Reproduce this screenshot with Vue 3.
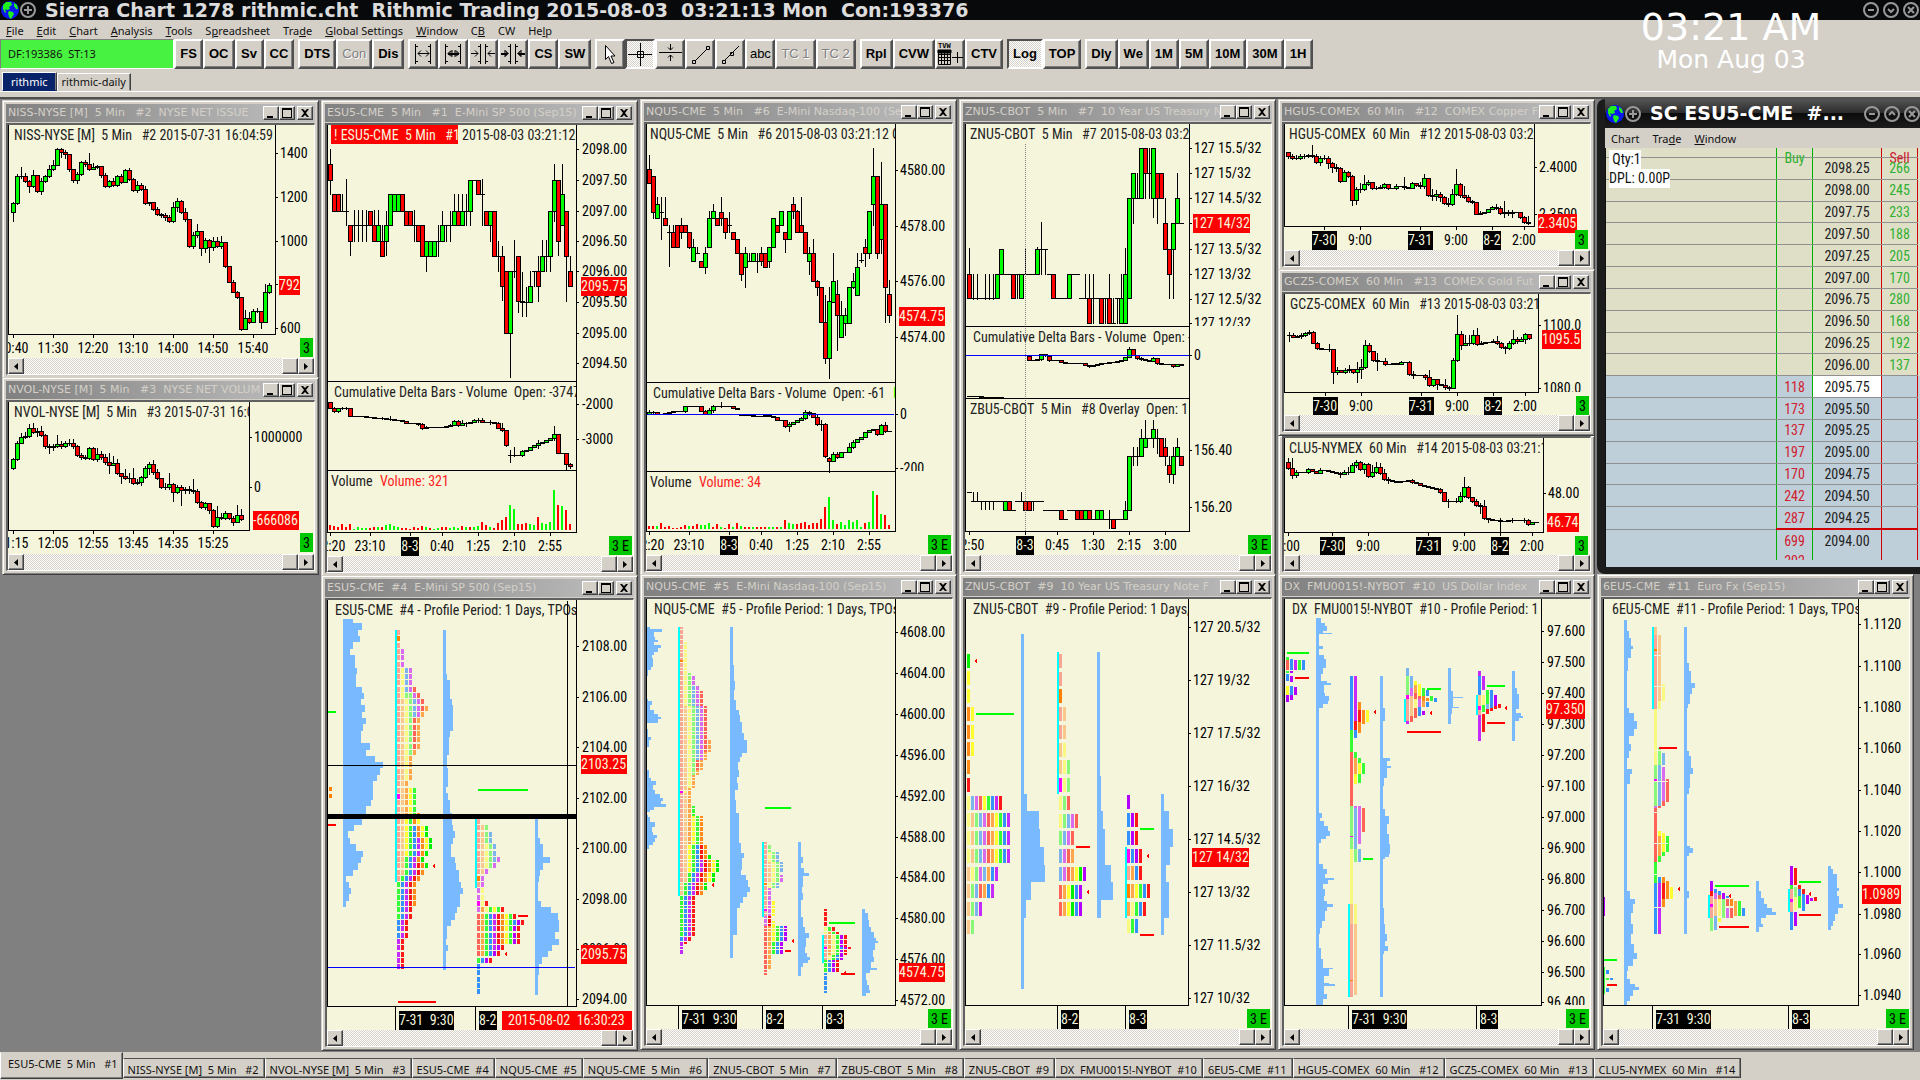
<template>
  <div class="app">
    <header class="titlebar">
      <svg class="globe" viewBox="0 0 20 20"><circle cx="10" cy="10" r="9" /><path d="M3 5l3-3 5 0 1 3-3 2 1 2-3 1-2-1 1 3-1 1-2-4zM9 11l4 1 1 2-3 5-2-2-1-4zM14 3l3 2 1 4-2 0-2-3z" /></svg>
      <svg class="ring" viewBox="0 0 16 16"><circle cx="8" cy="8" r="7" /><path d="M4 8h8M8 4v8" /></svg>
      <h1>Sierra Chart 1278 rithmic.cht&nbsp; Rithmic Trading 2015-08-03&nbsp; 03:21:13 Mon&nbsp; Con:193376</h1>
      <button v-for="g in ['M5 8h6', 'M5 7l3 3 3-3', 'M5 5l6 6M11 5l-6 6']" :key="g" class="round" aria-label="Window control">
        <svg class="ring" viewBox="0 0 16 16"><circle cx="8" cy="8" r="7" /><path :d="g" /></svg>
      </button>
    </header>

    <nav class="menu">
      <button v-for="m in menus" :key="m[0] + m[1]">{{ m[0] }}<u>{{ m[1] }}</u>{{ m[2] }}</button>
    </nav>

    <div class="toolbar">
      <div class="status">DF:193386&nbsp; ST:13</div>
      <div v-for="(group, gi) in tools" :key="gi" class="tool-group">
        <button
          v-for="t in group"
          :key="t.name"
          class="tool"
          :class="{ icon: t.icon, pressed: t.pressed, thin: t.thin }"
          :disabled="t.off"
          :aria-label="t.name"
        >
          <svg v-if="t.icon" viewBox="0 0 26 26">
            <path :d="t.icon" :class="{ heavy: t.heavy, pointer: t.pointer }" />
            <path v-if="t.solid" :d="t.solid" class="solid" />
            <text v-if="t.caption" x="1" y="7">{{ t.caption }}</text>
          </svg>
          <template v-else>{{ t.name }}</template>
        </button>
      </div>
    </div>

    <div class="books">
      <button class="book on">rithmic</button>
      <button class="book">rithmic-daily</button>
    </div>

    <main class="desktop">
      <div v-for="(col, ci) in columns" :key="ci" class="column">
        <section v-if="ci === 5" class="ladder">
          <div class="ladder-title">
            <svg class="globe" viewBox="0 0 20 20"><circle cx="10" cy="10" r="9" /><path d="M3 5l3-3 5 0 1 3-3 2 1 2-3 1-2-1 1 3-1 1-2-4zM9 11l4 1 1 2-3 5-2-2-1-4zM14 3l3 2 1 4-2 0-2-3z" /></svg>
            <svg class="ring" viewBox="0 0 16 16"><circle cx="8" cy="8" r="7" /><path d="M4 8h8M8 4v8" /></svg>
            <h2>SC ESU5-CME&nbsp; #...</h2>
            <button v-for="g in ['M5 8h6', 'M5 9l3-3 3 3', 'M5 5l6 6M11 5l-6 6']" :key="g" class="round" aria-label="Window control">
              <svg class="ring" viewBox="0 0 16 16"><circle cx="8" cy="8" r="7" /><path :d="g" /></svg>
            </button>
          </div>
          <nav class="menu inner">
            <button>Chart</button>
            <button>Tra<u>d</u>e</button>
            <button><u>W</u>indow</button>
          </nav>
          <div class="dom">
            <table>
              <thead>
                <tr>
                  <th class="work"></th>
                  <th class="buy"><span class="up">Buy</span></th>
                  <th class="price"></th>
                  <th class="sell"><span class="down">Sell</span></th>
                </tr>
              </thead>
              <tbody>
                <tr v-for="r in ladder" :key="r.price" :class="{ bid: r.bid, low: r.price === '2094.25' }">
                  <td></td>
                  <td class="buy down">{{ r.bid }}</td>
                  <td class="price" :class="{ last: r.price === '2095.75' }">{{ r.price }}</td>
                  <td class="sell up">{{ r.ask }}</td>
                </tr>
              </tbody>
              <tfoot>
                <tr>
                  <td></td>
                  <td class="buy"><span class="down">202</span></td>
                  <td class="price"></td>
                  <td class="sell"></td>
                </tr>
              </tfoot>
            </table>
            <div class="qty"><span>&nbsp;Qty:1</span><span>DPL: 0.00P</span></div>
          </div>
        </section>

        <section v-for="c in col" :key="c.name" class="win" :class="{ bare: !c.title }">
          <div v-if="c.title" class="win-title">
            <h2>{{ c.title }}</h2>
            <button aria-label="Minimize"><svg viewBox="0 0 12 10"><path d="M2 8h6v2h-6z" /></svg></button>
            <button aria-label="Maximize"><svg viewBox="0 0 12 10"><path d="M1 0h10v10h-10zM2 2v7h8v-7z" fill-rule="evenodd" /></svg></button>
            <button class="close" aria-label="Close"><svg viewBox="0 0 12 10"><path d="M2 1h2l2 2 2-2h2l-3 4 3 4h-2l-2-2-2 2h-2l3-4z" /></svg></button>
          </div>
          <div class="win-body">
            <svg class="chart" width="100%" :height="c.h">
              <svg :width="c.right - c.left" :height="c.bottom - c.top">
                <g :transform="`translate(${-c.left} ${-c.top})`">
                  <path v-for="(s, i) in c.shapes" :key="i" :d="s.d" :fill="s.fill" />
                  <path v-if="c.session" :d="`M${c.session}.5 ${c.top + 20}V${c.bottom}`" class="session" />
                  <rect v-if="c.alert" :x="c.left + 4" :y="c.top" width="127" height="19" fill="#f00" />
                  <text v-for="t in c.texts" :key="t[2]" :x="t[0]" :y="c.y(t[1]) + 5" :fill="t[3] || '#222'">{{ t[2] }}</text>
                  <path v-if="c.cursor" :d="rect(c.cursor, c.top + 1, 1, c.h)" />
                </g>
              </svg>
              <g :transform="`translate(${-c.left} ${-c.top})`">
                <path :d="c.frame" />
                <svg v-for="a in c.axis" :key="a[0]" :x="c.right" :y="c.top" width="80" :height="floorOf(c, a[0]) - c.top">
                  <rect x="0" :y="c.y(a[0]) - c.top" width="3" height="1" />
                  <text :x="c.ax - c.right" :y="c.y(a[0]) - c.top + 5">{{ a[1] }}</text>
                </svg>
                <g v-for="m in c.marks" :key="m[1]">
                  <rect :x="c.ax - 1" :y="c.y(m[0]) - 9" :width="textWidth(m[1])" height="19" fill="#f00" />
                  <text :x="c.ax - 1" :y="c.y(m[0]) + 5" class="mark">{{ m[1] }}</text>
                </g>
                <g v-for="t in c.times" :key="t[0]">
                  <template v-if="c.sessions">
                    <rect :x="t[0]" :y="c.bottom" width="1" height="24" />
                    <rect :x="t[0] + 4" :y="c.y(c.timeY) - 9" :width="boxWidth(t[1])" height="19" />
                    <text :x="t[0] + 4" :y="c.y(c.timeY) + 5" class="inv">{{ t[1] }}</text>
                  </template>
                  <template v-else>
                    <rect :x="t[0]" :y="c.bottom" width="1" height="4" />
                    <rect v-if="t[2]" :x="t[0] - boxWidth(t[1]) / 2" :y="c.y(c.timeY) - 9" :width="boxWidth(t[1])" height="19" />
                    <text :x="t[0]" :y="c.y(c.timeY) + 5" text-anchor="middle" :class="{ inv: t[2] }">{{ t[1] }}</text>
                  </template>
                </g>
                <g v-if="c.cursor">
                  <rect x="502" :y="c.y(c.timeY) - 9" width="130" height="19" fill="#f00" />
                  <text x="508" :y="c.y(c.timeY) + 5" class="mark">2015-08-02&nbsp; 16:30:23</text>
                </g>
                <g v-if="c.badge">
                  <rect :x="c.badge[0]" :y="c.y(c.timeY) - 10" :width="c.badge[1] === '3' ? 13 : 23" height="19" fill="#00c800" />
                  <text :x="c.badge[0] + 3" :y="c.y(c.timeY) + 5">{{ c.badge[1] }}</text>
                </g>
              </g>
            </svg>
            <div class="scroll">
              <button aria-label="Scroll left"><svg viewBox="0 0 4 7"><path d="M4 0v7L0 3.5z" /></svg></button>
              <span class="thumb"></span>
              <button aria-label="Scroll right"><svg viewBox="0 0 4 7"><path d="M0 0v7l4-3.5z" /></svg></button>
            </div>
          </div>
        </section>
      </div>
    </main>

    <footer class="tabs">
      <button v-for="(t, i) in tabs" :key="t" :class="{ on: i === 0 }">{{ t }}</button>
    </footer>

    <div class="clock">
      <div class="time">03:21 AM</div>
      <div class="date">Mon Aug 03</div>
    </div>
  </div>
</template>

<script setup>
const menus = [
  ["", "F", "ile"], ["", "E", "dit"], ["", "C", "hart"], ["", "A", "nalysis"], ["", "T", "ools"],
  ["S", "p", "readsheet"], ["Tra", "d", "e"], ["", "G", "lobal Settings"], ["", "W", "indow"],
  ["C", "B", ""], ["CW", "", ""], ["He", "l", "p"],
];

const WIDER = "M5.5 3v20M5 5.5h3M5 20.5h3M20.5 3v20M18 5.5h3M18 20.5h3M8 12.5h11M11 9.5l-3 3 3 3M16 9.5l3 3-3 3";
const NARROWER = "M10.5 3v20M8 5.5h3M8 20.5h3M15.5 3v20M15 5.5h3M15 20.5h3M1 12.5h7M5 9.5l3 3-3 3M18 12.5h7M21 9.5l-3 3 3 3";

const tools = [
  [{ name: "FS" }, { name: "OC" }, { name: "Sv" }, { name: "CC" }],
  [{ name: "DTS" }, { name: "Con", off: true }, { name: "Dis" }],
  [
    { name: "Wider", icon: WIDER },
    { name: "Wider fast", icon: WIDER + "M9 12.5l3-3v6zM18 12.5l-3-3v6zM8 13.5h11" },
    { name: "Narrower", icon: NARROWER },
    { name: "Narrower fast", icon: NARROWER + "M8 12.5l-3-3v6zM18 12.5l3-3v6zM1 13.5h6M19 13.5h6" },
    { name: "CS" },
    { name: "SW" },
  ],
  [
    { name: "Pointer", icon: "M8.5 4.5v14l3-3 3 7 2.5-1-3-6.5h4z", pointer: true },
    { name: "Crosshair", icon: "M1 13.5h24M13.5 2v23M10.5 10.5h6v6h-6z", pressed: true },
    { name: "Level", icon: "M2 11.5h23M13.5 3v6M11 6.5l2.5 2.5 2.5-2.5M13.5 14v6M11 16.5l2.5-2.5 2.5 2.5" },
    { name: "Line", icon: "M8 20L20 8M5.5 19.5h3v3h-3zM19.5 5.5h3v3h-3z" },
    { name: "Ray", icon: "M7 20L22 5M5.5 19.5h3v3h-3zM13.5 11.5h3v3h-3z" },
    { name: "abc", thin: true },
    { name: "TC 1", off: true },
    { name: "TC 2", off: true },
  ],
  [
    { name: "Rpl" },
    { name: "CVW" },
    { name: "TVW", caption: "TVW", icon: "M15 16.5h11M20.5 11v11M1.5 9.5h12v14h-12zM1 13.5h12M1 16.5h12M1 19.5h12M4.5 10v13M7.5 10v13M10.5 10v13", solid: "M1 9h13v3h-13z" },
    { name: "CTV" },
  ],
  [{ name: "Log", pressed: true }, { name: "TOP" }],
  [{ name: "Dly" }, { name: "We" }, { name: "1M" }, { name: "5M" }, { name: "10M" }, { name: "30M" }, { name: "1H" }],
];

const asks = [266, 245, 233, 188, 205, 170, 280, 168, 192, 137];
const bids = [118, 173, 137, 197, 170, 242, 287, 699];
const ladder = Array.from({ length: 18 }, (_, i) => ({
  price: (2098.25 - i * 0.25).toFixed(2),
  ask: asks[i],
  bid: bids[i - 10],
}));

const N = "\u00a0";
const sp = (s) => s.replace(/ {2,}/g, (m) => N.repeat(m.length));

const tabs = [
  "ESU5-CME  5 Min   #1", "NISS-NYSE [M]  5 Min   #2", "NVOL-NYSE [M]  5 Min   #3", "ESU5-CME  #4",
  "NQU5-CME  #5", "NQU5-CME  5 Min   #6", "ZNU5-CBOT  5 Min   #7", "ZBU5-CBOT  5 Min   #8",
  "ZNU5-CBOT  #9", "DX  FMU0015!-NYBOT  #10", "6EU5-CME  #11", "HGU5-COMEX  60 Min   #12",
  "GCZ5-COMEX  60 Min   #13", "CLU5-NYMEX  60 Min   #14",
].map(sp);

const rect = (x, y, w, h) => `M${x} ${y}h${w}v${h}h${-w}z`;

const CHAR = { ".": 4, "-": 4, " ": 3, "/": 5 };
const textWidth = (s) => [...s].reduce((n, ch) => n + (CHAR[ch] || 7), 0);
const boxWidth = (s) => (s.length > 5 ? 55 : s.length === 4 ? 25 : 18);

// vertical values are kept in thirds of a pixel below the row origin
const TOP = 95;
const LOW = 570;
const at = (base) => (v) => base + Math.round(v / 3);

const expand = (s) =>
  s.trim().split(/\s+/).flatMap((e) => {
    const m = e.match(/^(\d+)\*(.+)$/);
    return m ? Array(+m[1]).fill(m[2]) : [e];
  });

// close/high/low/open, the open defaults to the previous close
function candles(x0, open, data) {
  const y = at(TOP);
  let black = "";
  let up = "";
  let down = "";
  let prev = open;
  expand(data).forEach((e, i) => {
    if (e === "-") return;
    const [close, hi = close, lo = close, o = prev] = e.split("/").map(Number);
    const x = x0 + i * 4;
    const t = y(Math.min(o, close));
    const b = y(Math.max(o, close));
    const wt = Math.min(y(hi), t);
    black += rect(x, wt, 1, Math.max(y(lo), b) - wt + 1) + rect(x - 2, t, 5, b - t + 1);
    if (b - t > 1) {
      const body = rect(x - 1, t + 1, 3, b - t - 1);
      if (close < o) up += body;
      else down += body;
    }
    prev = close;
  });
  return [{ fill: "#000", d: black }, { fill: "#0f0", d: up }, { fill: "#f00", d: down }];
}

function volume(x0, floor, data) {
  const out = { g: "", r: "" };
  expand(data).forEach((e, i) => {
    const h = Math.round(parseInt(e) / 3);
    out[e.at(-1)] += rect(x0 + i * 4 - 1, at(TOP)(floor) - h, 2, h);
  });
  return [{ fill: "#0f0", d: out.g }, { fill: "#f00", d: out.r }];
}

const PALETTE = {
  p: "#f9a596", o: "#f9c78b", y: "#f9f880", g: "#88f77a", b: "#7ab5ee", m: "#d86cf0", r: "#ff6257",
  O: "#ffa54a", Y: "#ffff30", G: "#38fb38", B: "#3392fb", M: "#c42bfb", R: "#ff1818", N: "#ff8c1a",
  h: "#ff8000", v: "#ff00ff", e: "#00f000", V: "#b400ff",
};

const paint = (cells) => {
  const by = {};
  cells.forEach(([c, d]) => (by[c] = (by[c] || "") + d));
  return Object.entries(by).map(([c, d]) => ({ fill: PALETTE[c], d }));
};

function tpo(x, y0, step, cell, rows) {
  const cells = [];
  expand(rows).forEach((row, i) => {
    [...row].forEach((c, k) => cells.push([c, rect(x + k * 4, at(LOW)(y0 + i * step), 3, cell)]));
  });
  return paint(cells);
}

// column:from-to+color, h and v marks go on top of the column they sit in
function strips(x, data) {
  const cells = data.trim().split(/\s+/).map((e) => {
    const [, k, a, b, c] = e.match(/^(-?\d+):(\d+)-(\d+)(\w)$/);
    const y = at(LOW)(+a);
    return [c, rect(x + k * 4, y, 3, Math.max(1, at(LOW)(+b) - y))];
  });
  const mark = ([c]) => c === "h" || c === "v";
  return [...paint(cells.filter((c) => !mark(c))), ...paint(cells.filter(mark))];
}

function hist(x, data, end) {
  const steps = data.trim().split(/\s+/).map((e) => e.split(":").map(Number));
  const y = at(LOW);
  const d = steps
    .map(([v, w], i) => {
      const to = i + 1 < steps.length ? steps[i + 1][0] : end;
      return w ? rect(x, y(v), Math.round(w / 3), y(to) - y(v)) : "";
    })
    .join("");
  return [{ fill: "#78b9ff", d }];
}

const cyan = (...list) => [{ fill: "#00ffff", d: list.map(([x, a, b]) => rect(x, at(LOW)(a), 2, at(LOW)(b) - at(LOW)(a))).join("") }];
const dash = (fill, ...list) => [{ fill, d: list.map(([x, x2, v]) => rect(x, at(LOW)(v) - 1, x2 - x, 2)).join("") }];
const arrows = (...list) => [{ fill: "#f00", d: list.map(([x, v]) => `M${x} ${at(LOW)(v)}l3 -3v6z`).join("") }];
const hline = (base, fill, x, x2, v, h = 1) => [{ fill, d: rect(x, at(base)(v), x2 - x, h) }];

const GREEN = "#0f0";
const RED = "#f00";
const PAPER = "#f5f5dc";

function chart(c) {
  const base = c.base || TOP;
  const y = at(base);
  const frame =
    rect(c.left, c.top, 1, c.bottom - c.top) +
    rect(c.right, c.top, 1, c.bottom - c.top + 1) +
    rect(c.left, c.bottom, c.right - c.left, 1) +
    (c.panes || []).map((v) => rect(c.left, y(v), c.right - c.left, 1)).join("");
  return {
    ...c,
    y,
    frame,
    title: c.title && sp(c.title),
    texts: c.texts.map(([x, v, t, f]) => [x, v, sp(t), f]),
    times: c.times.map(([x, t, k]) => [x, sp(t), k]),
  };
}

const floorOf = (c, v) => Math.min(c.bottom, ...(c.panes || []).filter((p) => p > v).map(c.y));

const niss = chart({
  name: "niss", title: "NISS-NYSE [M]  5 Min   #2  NYSE NET ISSUE", left: 8, top: 125, h: 233, right: 275, bottom: 334, ax: 280,
  texts: [[14, 119, "NISS-NYSE [M]  5 Min   #2 2015-07-31 16:04:59"]],
  axis: [[175, "1400"], [305, "1200"], [437, "1000"], [568, ""], [698, "600"]],
  marks: [[571, "792"]],
  timeY: 758, badge: [300, "3"],
  times: [[13, "10:40"], [53, "11:30"], [93, "12:20"], [133, "13:10"], [173, "14:00"], [213, "14:50"], [253, "15:40"]],
  shapes: candles(13, 350, `325/322/377 244/238/326 244/215/250 257/235/262 273/255/290 241/225/275 289/240/291 257/250/296 244/240/260 223/210/245
    209/195/225 163/160/210 172/160/187 178/165/190 223/178/228 256/223/260 238/230/265 202/198/240 207/195/212 222/175/225
    217/205/222 214/210/218 240/213/245 273/235/275 258/255/275 270/250/273 243/240/273 262/237/265 226/222/262 253/220/255
    286/250/288 270/258/290 282/265/285 324/272/328 322/320/330 343/322/345 357/335/360 360/355/365 367/355/375 379/360/382
    336/320/380 319/310/348 352/315/355 373/340/377 452/373/457 419/410/460 407/387/425 460/408/480 436/430/470 457/432/500
    438/425/465 452/425/455 441/422/460 512/440/515 560/512/562 590/555/592 607/588/610 703/605/705 670/645/703 682/650/685
    647/643/680 648/640/650 682/648/698 592/568/682 570/565/593`),
});

const nvol = chart({
  name: "nvol", title: "NVOL-NYSE [M]  5 Min   #3  NYSE NET VOLUM", left: 8, top: 401, h: 152, right: 249, bottom: 529, ax: 254,
  texts: [[14, 947, "NVOL-NYSE [M]  5 Min   #3 2015-07-31 16:0"]],
  axis: [[1022, "1000000"], [1172, "0"]],
  marks: [[1271, "-666086"]],
  timeY: 1342, badge: [300, "3"],
  times: [[13, "11:15"], [53, "12:05"], [93, "12:55"], [133, "13:45"], [173, "14:35"], [213, "15:25"]],
  shapes: candles(13, 1117, `1090/1085/1118 1040/1035/1092 1023/1012/1042 1020/1008/1025 996/985/1022 1008/980/1012 1005/995/1020 1017/990/1020
    1050/1015/1055 1053/1045/1070 1050/1045/1062 1043/1018/1052 1050/1035/1055 1042/1035/1052 1042/1030/1048 1050/1028/1055
    1078/1048/1080 1082/1070/1088 1086/1078/1090 1055/1052/1090 1090/1052/1093 1073/1055/1095 1082/1065/1088 1098/1075/1105
    1108/1070/1130 1100/1080/1108 1132/1090/1135 1140/1130/1162 1145/1120/1150 1147/1130/1158 1162/1115/1165 1157/1148/1165
    1143/1140/1168 1117/1110/1145 1103/1098/1135 1128/1092/1135 1147/1120/1150 1172/1145/1175 1173/1162/1180 1165/1130/1178
    1188/1162/1215 1172/1168/1190 1183/1168/1227 1180/1172/1190 1183/1170/1190 1186/1150/1190 1218/1180/1220 1232/1215/1235
    1222/1218/1238 1242/1220/1250 1290/1240/1293 1263/1230/1292 1265/1250/1270 1252/1245/1268 1265/1250/1270 1277/1260/1288
    1258/1228/1278 1270/1240/1272`),
});

const es = chart({
  name: "es", title: "ESU5-CME  5 Min   #1  E-Mini SP 500 (Sep15)", left: 327, top: 125, h: 431, right: 576, bottom: 532, ax: 582, alert: true,
  panes: [859, 1126],
  texts: [
    [334, 119, "! ESU5-CME  5 Min   #1", PAPER], [462, 119, "2015-08-03 03:21:12"],
    [334, 890, "Cumulative Delta Bars - Volume  Open: -3747"], [331, 1158, "Volume"], [380, 1158, "Volume: 321", "#f22"],
  ],
  axis: [[163, "2098.00"], [254, "2097.50"], [347, "2097.00"], [437, "2096.50"], [529, "2096.00"], [620, "2095.50"], [713, "2095.00"], [803, "2094.50"], [926, "-2000"], [1031, "-3000"]],
  marks: [[574, "2095.75"]],
  timeY: 1352, badge: [609, "3 E"],
  times: [[330, "22:20"], [370, "23:10"], [410, "8-3", 1], [442, "0:40"], [478, "1:25"], [514, "2:10"], [550, "2:55"]],
  shapes: [
    ...candles(330, 208, `254/163/297 2*347/297/347/298 347/297/347 347/252/391 437/391/480/391 4*391/345/437/391 391/347/391/347 437/345/437
      391/345/437 482/391/482/437 391/347/480/437 298/298/391/391 2*298/298/347/347 347/298/347/298 2*391/347/391/347 391/345/437
      437/391/437/391 482/391/482/391 437/437/527/482 2*437/437/482/482 437/391/482 391/347/437 391/391/437 391/347/437 347/297/391
      391/297/391 347/297/391 347/297/391 254/254/391 254 298/254/298 298/252/391 391/347/391/347 347/347/437/391 482/347/482/347
      482/437/527 574/454/615/482 713/529/713/529 529/529/845/713 529/435/545 619/482/650/482 620/530/662 620/575/662 574/528/620
      529/529/574/529 574/482/617/529 482/435/529/529 482/435/527 347/347/527 254/207/377 437/254/480/254 298/207/391/391
      482/347/617/347 574/482/574/529`),
    ...candles(330, 922, `938/920/940 948/935/950 940/938/950 940/936/941 940/936/941 962/938/963 962 963 964 965 966 968 969 970/965/971 973
      972/963/975 974 975 978 983 985 985 987/985/990 1000/985/1002 997/993/1000 996 997 996 995 993 990/986/992 977/975/986
      990/975/992 985/975/990 985/982/992 980 976/972/980 975/968/980 980/970/982 980 982/975/986 985 998/982/1000 1006/985/1008
      1050/1005/1052 1080/1065/1100/1080 1080/1055/1083 1080 1068/1065/1083 1066 1056 1050 1045/1035/1060 1040 1035 1030
      1018/993/1035 1073/1030/1074 1075 1108/1075/1125 1112/1105/1118`),
    ...volume(330, 1305, `15r 12r 8r 18r 9r 18r 4g 9g 6g 6g 6r 9r 9g 8r 14g 18g 12g 8g 6r 6r 4r 9r 6r 13r 9g 5r 4g 6g 8r 9r 5g 8g 6g 12r 9g 8r
      8g 12g 24r 14r 8g 6r 20r 30r 38r 75g 63g 18r 18r 20r 18g 14g 39r 20g 18g 24g 120g 75r 72g 60r 18r`),
  ],
});

const nq = chart({
  name: "nq", title: "NQU5-CME  5 Min   #6  E-Mini Nasdaq-100 (Sep15)", left: 646, top: 124, h: 431, right: 895, bottom: 531, ax: 900,
  panes: [862, 1129],
  texts: [
    [650, 117, "NQU5-CME  5 Min   #6 2015-08-03 03:21:12 O"], [653, 893, "Cumulative Delta Bars - Volume  Open: -61"], [893, 893, "H", GREEN],
    [650, 1160, "Volume"], [699, 1160, "Volume: 34", "#f22"],
  ],
  axis: [[224, "4580.00"], [392, "4578.00"], [557, "4576.00"], [725, "4574.00"], [958, "0"], [1118, "-200"]],
  marks: [[662, "4574.75"]],
  timeY: 1350, badge: [928, "3 E"],
  times: [[649, "22:20"], [689, "23:10"], [729, "8-3", 1], [761, "0:40"], [797, "1:25"], [833, "2:10"], [869, "2:55"]],
  shapes: [
    ...candles(649, 223, `265/180/265 350/243/368/243 328/307/370/370 350/305/432/350 391/305/391/370 412/390/512/412 455/390/455/412
      455/391/455/391 412/370/430/391 412/391/412/391 455/410/460/412 455/432/495/497 475/455/475/475 515/497/515/497 475/455/533
      370/348/455/455 348/327/370 391/370/391/370 370/305/391/350 412/370/430/370 391/350/412/391 433/412/433/412 475/433/475/433
      537/475/555/475 475/455/575/515 497/475/497/497 475/475/497/497 497/475/530/497 497/455/510/475 515/475/515/475
      455/455/515/497 370/370/455/455 412/391/412/391 348/348/391/391 433/412/472/412 348/348/433/433 348/307/370/327
      412/345/412/348 412/305/412/391 475/412/475/412 475/455/537/497 557/433/557/475 577/555/600/557 682/577/682/577
      788/600/803/682 619/577/848/788 557/475/620/620 661/555/765/598 661/619/723/725 661/640/720/683 577/577/683/683
      557/535/580/577 515/475/600/600 495/475/500/495 475/433/513/455 348/348/490/475 243/158/390/328 475/243/490/243
      328/200/475/433 577/328/680/328 661/555/680/598`),
    ...candles(649, 957, `950/945/957 952/947/955 957/950/958 957 955 950 948 948 948 934/932/950 934 934 934 947/933/948 957/945/958
      945/940/955 934/930/950 934 934/922/936 934 934 938/932/940 943 961/961/961/961 961 961 962 962 963 961/957/963 963 966
      975/970/976 976 993/980/996 988/980/1008 980 975 970/965/972 950/945/972 954/948/960 966/955/967 986/960/990 986/975/1005
      1084/985/1086 1097/1085/1130/1090 1076/1072/1098 1087/1070/1088 1072 1070 1057/1045/1070 1040/1035/1058 1032 1025 1012 1005
      1003 1018/1003/1020 990/988/1018 1008/980/1010 1008`),
    ...hline(TOP, "#00f", 645, 894, 958),
    ...volume(649, 1302, `9r 9r 9g 17r 6r 9r 3r 3r 6r 12r 9g 9r 14r 12g 12g 17g 6r 14r 6g 3r 14r 6g 17r 9g 6r 6r 6g 6r 6r 6r 6g 6g 6r 6g 27r
      18g 14g 14r 18r 20r 11r 18r 18r 30r 66r 96g 27g 14r 20g 12g 27g 20g 27g 6g 17r 20g 114g 102r 44g 42r 12r`),
  ],
});

const zn = chart({
  name: "zn", title: "ZNU5-CBOT  5 Min   #7  10 Year US Treasury Note", left: 965, top: 124, h: 431, right: 1189, bottom: 531, ax: 1194, session: 1025,
  panes: [693, 910],
  texts: [[970, 117, "ZNU5-CBOT  5 Min   #7 2015-08-03 03:2"], [973, 725, "Cumulative Delta Bars - Volume  Open: -"], [970, 941, "ZBU5-CBOT  5 Min   #8 Overlay  Open: 156"]],
  axis: [[158, "127 15.5/32"], [234, "127 15/32"], [308, "127 14.5/32"], [383, ""], [461, "127 13.5/32"], [536, "127 13/32"], [611, "127 12.5/32"], [683, "127 12/32"], [781, "0"], [1065, "156.40"], [1235, "156.20"]],
  marks: [[383, "127 14/32"]],
  timeY: 1350, badge: [1248, "3 E"],
  times: [[969, "22:50"], [1025, "8-3", 1], [1057, "0:45"], [1093, "1:30"], [1129, "2:15"], [1165, "3:00"]],
  shapes: [
    ...candles(969, 536, `610/460/610 610/536/611 610/536/611 610 610/536/611 610/536/611 610/536/611 536/536/610/610 461/461/536/536
      536/536/536/536 536 610/536/610 536/536/610/536 536/536/610/610 536/460/536 536 536 461/455/536 461/380/536 461/461/536
      536/536/536/536 610/536/610 610 610 610 536/536/610 536 536 610/610/610/610 610/536/610 685/536/685 610/536/685/610 610
      685/610/685 610/610/685/610 685/536/685 685/610/685 610/610/685/610 610/536/685/685 536/460/685/685 308/308/610/610
      233/233/383/308 308/233/308/308 158/158/308 233/158/308/158 233/158/308 158/158/365/308 308/233/383/233 308/233/308/233
      461/308/461/383 536/461/610/461 383/383/610/461 308/233/383 383/383/383/383`),
    ...candles(969, 902, `902 903 904 905 906 906 905 905 908 908 - - 909 909 - 796/783/796/783 795 793 778/778/795 780/778/782 795/780/797/783
      795 796 802/796/802 5*803 810/803/810 813/810/815 811 806 803 803 802 802 797 795 785 763/757/783 780/763/781 790/780/793
      792/787/795 795 797 790/787/798 805/790/806 808 808 808 813/807/815 808 810/807/811`),
    ...hline(TOP, "#00f", 965, 1189, 781),
    ...candles(969, 1192, `1192 1218/1190/1218/1218 1218/1190/1218 4*1218/1218/1243 1218 1218 1218/1218/1245/1245 1245/1218/1245/1218 1245
      1218/1218/1218/1218 1218/1190/1218 2*1245/1218/1245/1218 1218/1218/1245/1218 1218 1218 1245/1245/1245/1245 1245 1245 1245
      1273/1245/1273 1273 1245/1245/1245/1245 1245 2*1273/1245/1273/1245 1245/1245/1273/1273 1273/1245/1273/1245 1273
      2*1245/1245/1273/1273 1273/1273/1273/1273 1273/1245/1300 1300/1273/1300 1273/1273/1273/1273 1273 1245/1218/1273
      1083/1083/1245 2*1083/1055/1110 1030/1003/1083 1030/975/1057/1057 1030 1003/975/1057 1030/1003/1075/1030 1083/1030/1083
      1083/1030/1110/1057 1137/1083/1160/1110 1083/1055/1163 1057/1030/1083 1110/1083/1110/1083`),
  ],
});

const hg = chart({
  name: "hg", title: "HGU5-COMEX  60 Min   #12  COMEX Copper F", left: 1284, top: 124, h: 126, right: 1534, bottom: 226, ax: 1539,
  texts: [[1289, 117, "HGU5-COMEX  60 Min   #12 2015-08-03 03:21"]],
  axis: [[215, "2.4000"], [356, "2.3500"]],
  marks: [[384, "2.3405"]],
  timeY: 434, badge: [1575, "3"],
  times: [[1324, "7-30", 1], [1360, "9:00"], [1420, "7-31", 1], [1456, "9:00"], [1492, "8-2", 1], [1524, "2:00"]],
  shapes: candles(1288, 172, `182/170/188 188/178/192 190/180/192 182/178/192 183/178/188 180/176/185 182/150/186 200/176/205 188/182/210
    188/180/192 205/182/218 215/200/230 220/208/228 257/215/260 232/225/257 242/228/245 316/240/330 282/275/326 282/265/290
    268/240/285 262/255/270 280/260/283 278/272/282 275/270/280 268/265/278 278/266/282 280 272/268/283 272 275/245/282 278
    265/262/280 270/264/274 272/262/278 250/236/278 300/250/303 302/282/315 298/285/315 305/290/318 325/302/328 328/310/333
    298/282/330 266/222/300 300/264/305 305/272/310 318/300/322 322/315/325 356/320/358 353/348/356 350 343/342/352 335/332/340
    338/328/342 355/333/358 352/318/365 355/345/360 350/345/365 352 365/350/370 380/362/384 384/362/386`),
});

const gc = chart({
  name: "gc", title: "GCZ5-COMEX  60 Min   #13  COMEX Gold Fut", left: 1284, top: 293, h: 121, right: 1538, bottom: 391, ax: 1543,
  texts: [[1290, 624, "GCZ5-COMEX  60 Min   #13 2015-08-03 03:21"]],
  axis: [[686, "1100.0"], [877, "1080.0"]],
  marks: [[729, "1095.5"]],
  timeY: 929, badge: [1576, "3"],
  times: [[1325, "7-30", 1], [1361, "9:00"], [1421, "7-31", 1], [1457, "9:00"], [1493, "8-2", 1], [1525, "2:00"]],
  shapes: candles(1289, 718, `717/708/735 722/712/724 720/716/722 718/712/726 712/708/720 707/703/714 740/705/742 757/738/760 758 760
    760/745/765 828/758/860 822/812/835 828 822/815/830 818/808/828 828/818/832 820/798/858 814/790/845 748/732/816 766/740/768
    793/764/795 795/770/822 796 803/785/808 804 802 803 797/795/805 798 833/795/838 836/825/845 838 838 843/835/850 868/822/870
    850/848/870 865/850/880 866 873/850/880 877/870/882 793/785/874 715/657/795 748/705/760 740/718/748 742/718/746 718/702/745
    745/695/748 740/735/745 738 737 735/730/738 742/720/745 753/738/756 757/750/770 742/735/758 730/703/744 735/722/740
    728/722/735 715/712/740 727/714/730`),
});

const cl = chart({
  name: "cl", left: 1284, top: 438, h: 117, right: 1543, bottom: 532, ax: 1548,
  texts: [[1289, 1058, "CLU5-NYMEX  60 Min   #14 2015-08-03 03:21:1"]],
  axis: [[1193, "48.00"]],
  marks: [[1280, "46.74"]],
  timeY: 1352, badge: [1575, "3"],
  times: [[1288, "3:00"], [1332, "7-30", 1], [1368, "9:00"], [1428, "7-31", 1], [1464, "9:00"], [1500, "8-2", 1], [1532, "2:00"]],
  shapes: candles(1288, 1102, `1120/1090/1122 1140/1090/1150 1130/1125/1145 1130 1131 1122/1118/1133 1128 1134 1124/1120/1135 1126 1128 1130
    1135 1138/1130/1145 1132/1125/1138 1130/1115/1138 1110/1105/1132 1102/1096/1115 1122/1098/1125 1108/1105/1135 1143/1105/1145
    1132/1110/1145 1117/1100/1135 1135/1105/1138 1153/1122/1155 1155/1145/1165 1158 1160 1158 1157 1155 1160/1152/1165 1165 1170
    1173 1175 1178 1182 1192/1180/1195 1217/1190/1218 1218/1212/1235 1218 1218/1210/1222 1203/1190/1220 1175/1145/1205
    1207/1172/1210 1218/1205/1222 1230/1212/1232 1232/1225/1253 1270/1215/1272 1272/1268/1280 1275 1276 1278/1270/1308 1277 1276
    1275/1270/1280 1276 1275 1274/1268/1280 1288/1272/1290 1282 1281`),
});

const esProfile = chart({
  name: "es4", base: LOW, title: "ESU5-CME  #4  E-Mini SP 500 (Sep15)", left: 327, top: 600, h: 430, right: 576, bottom: 1006, ax: 582, sessions: true, cursor: 567,
  texts: [[335, 119, "ESU5-CME  #4 - Profile Period: 1 Days, TPOs"]],
  axis: [[227, "2108.00"], [380, "2106.00"], [530, "2104.00"], [683, "2102.00"], [833, "2100.00"], [986, "2098.00"], [1136, "2096.00"], [1286, "2094.00"]],
  marks: [[583, "2103.25"], [1153, "2095.75"]],
  timeY: 1349,
  times: [[395, "7-31  9:30"], [475, "8-2"]],
  shapes: [
    ...hist(343, `147:30 159:57 180:45 198:51 216:30 237:21 255:36 294:42 312:39 350:57 370:62 388:54 406:66 426:57 445:68 462:60 484:54
      520:81 540:69 558:96 576:120 595:111 615:102 633:90 690:84 708:69 732:57 766:33 783:15 804:21 822:39 842:60 861:54 880:45
      899:30 918:9 936:18 955:24 972:18 993:9`, 1011),
    ...hist(443, `180:9 312:12 330:21 388:27 406:30 484:21 500:18 555:12 595:15 650:9 670:15 690:21 730:27 766:30 783:36 804:30 822:24
      860:36 880:39 899:48 936:54 955:60 972:51 1010:42 1030:36 1050:24 1068:12 1106:9 1125:15 1143:9`, 1200),
    ...hist(535, `747:9 804:15 822:24 861:45 880:24 899:15 918:12 936:9 993:18 1012:48 1030:69 1050:72 1087:60 1106:72 1125:51 1143:39
      1162:21 1181:12 1215:9`, 1275),
    ...cyan([395, 180, 936], [475, 747, 955]),
    ...tpo(397, 180, 18.92, 5, `p h p 3*pm 3*pybm pybmr pyggmr poygbmr poygbmrO poygbmO 5*poygrO poygO 4*poyO poO poOYG voOYG 2*poOYG poOYGN
      poYGNY 2*poYGBNYe 2*poYGBMNYe poYGBMNe poGBMNe poGBMRNe poGBMRN pGBMRN 4*GBMRN 2*GBMR 3*BMR 5*MR`),
    ...tpo(477, 747, 18.92, 5, `p pog 2*pogb 2*poygb poygbm poygm pom hm pm 2*my vyR mOyGYGR rOGBMRNYGR rOGBMRNYGBVR 3*rOGBMRNYGVR rOGBMVR
      rOGBVR GBVR 5*B`),
    ...dash(GREEN, [327, 336, 426], [478, 528, 660]),
    ...dash(RED, [327, 336, 765], [518, 528, 1038], [398, 436, 1296]),
    ...dash("#ff8000", [329, 332, 655], [329, 332, 661], [329, 332, 675], [329, 332, 681]),
    ...arrows([432, 889], [504, 1153]),
    ...hline(LOW, "#000", 327, 576, 586),
    ...hline(LOW, "#000", 327, 576, 732, 5),
    ...hline(LOW, "#00f", 327, 575, 1192),
  ],
});

const nqProfile = chart({
  name: "nq5", base: LOW, title: "NQU5-CME  #5  E-Mini Nasdaq-100 (Sep15)", left: 646, top: 599, h: 430, right: 895, bottom: 1005, ax: 900, sessions: true,
  texts: [[654, 117, "NQU5-CME  #5 - Profile Period: 1 Days, TPOs"]],
  axis: [[185, "4608.00"], [308, "4604.00"], [431, "4600.00"], [554, "4596.00"], [677, "4592.00"], [800, "4588.00"], [922, "4584.00"], [1045, "4580.00"], [1168, "4576.00"], [1290, "4572.00"]],
  marks: [[1207, "4574.75"]],
  timeY: 1347, badge: [928, "3 E"],
  times: [[678, "7-31  9:30"], [762, "8-2"], [822, "8-3"]],
  shapes: [
    ...hist(646, `171:12 177:48 186:24 200:28 210:35 216:24 225:45 235:36 245:25 255:18 265:20 290:15 300:6 318:0 387:6 393:18 405:12
      420:24 432:36 440:45 448:36 460:0 477:5 500:15 510:8 530:0 600:9 625:15 632:30 645:21 660:27 672:42 685:51 693:45 702:60
      710:24 720:12 726:0 735:5 740:12 757:27 770:18 785:22 795:33 805:27 815:20 825:10`, 838),
    ...hist(730, `171:9 285:12 333:15 360:12 390:18 420:28 435:30 455:36 490:42 510:50 530:51 550:36 560:30 575:24 600:27 620:21 640:24
      660:15 690:18 730:27 790:28 820:33 850:42 865:36 900:33 915:48 930:54 950:60 965:50 980:40 1000:30 1015:21 1095:9`, 1164),
    ...hist(798, `816:9 860:15 880:9 895:18 910:33 917:15 950:12 970:15 990:9 1040:15 1070:21 1090:33 1105:24 1130:20 1150:27 1160:36
      1170:30 1180:15 1190:9`, 1217),
    ...hist(862, `1017:9 1030:18 1050:21 1070:27 1085:36 1105:42 1112:48 1120:40 1140:33 1160:36 1175:27 1193:45 1200:24 1210:12
      1230:15 1245:21 1260:24 1270:12`, 1278),
    ...cyan([678, 171, 978], [762, 816, 1041], [822, 1095, 1180]),
    ...tpo(680, 171, 7.68, 2, `6*p 7*py hy 4*py pyg 4*pygm 2*pygbm 6*pygbmr 13*poygbmr 5*poygbmrO 3*poygbmO 4*poygrO 2*poygO 5*poyO poO vyO
      5*poO 4*poOG 11*poOYGN 4*poYGBRN 2*poYGBRNe 5*poYGBMRNYe 4*poGBMRNYe 3*oGBMRNe 2*oGBMRN 16*GBMR 2*BMR MR 4*M`),
    ...tpo(764, 816, 7.68, 2, `p 3*pg 4*pygb 4*poygb poyg 3*poygm hygb pygb 5*pm 3*pmY vmY 2*pmY 2*mR 2*mRY 2*rOYGBV 4*rOYGBV 5*rOGBV 6*rO 2*r`),
    ...tpo(824, 1017, 7.68, 2, `7*R 2*yGR yOGR 5*pOyGVR vOyGBVR 2*pOyGVR 2*pyGBV 5*GBVR 8*B`),
    ...dash(GREEN, [765, 791, 714], [829, 855, 1058]),
    ...dash(RED, [785, 791, 1142], [841, 855, 1212]),
    ...arrows([711, 946], [791, 1114], [843, 1208]),
  ],
});

const znProfile = chart({
  name: "zn9", base: LOW, title: "ZNU5-CBOT  #9  10 Year US Treasury Note F", left: 965, top: 599, h: 430, right: 1188, bottom: 1005, ax: 1193, sessions: true,
  texts: [[973, 117, "ZNU5-CBOT  #9 - Profile Period: 1 Days,"]],
  axis: [[170, "127 20.5/32"], [329, "127 19/32"], [488, "127 17.5/32"], [647, "127 16/32"], [806, "127 14.5/32"], [965, "127 13/32"], [1124, "127 11.5/32"], [1283, "127 10/32"]],
  marks: [[860, "127 14/32"]],
  timeY: 1347, badge: [1247, "3 E"],
  times: [[1057, "8-2"], [1125, "8-3"]],
  shapes: [
    ...tpo(963, 198, 53.2, 14, "Y Ye RY RY RNY RNY RNY RN MR vybmrYGBMR 3*oyogbmrOYGBM OoygmbOBM oogbrOBM oogbM oog p p p"),
    ...hist(1021, "192:9 672:18 723:54 777:57 831:69 885:72 936:30 990:15 1044:9", 1257),
    ...tpo(1059, 252, 53.2, 14, "p p h po po oy oyg vyg ygr ygbmr gbmr bmrO bmrOYeV rOYeBV rOYeBV"),
    ...hist(1097, "246:9 618:12 723:18 777:24 885:42 936:48 990:12", 1044),
    ...tpo(1127, 676, 53.2, 14, "V BVR BVR vBVR pOBR hOYGBR OyGBR yGB"),
    ...hist(1161, "672:9 723:24 777:36 831:27 885:15 936:24 1044:9", 1095),
    ...cyan([1057, 246, 672], [1125, 831, 1044]),
    ...dash(GREEN, [976, 1014, 432], [1140, 1154, 777]),
    ...dash(RED, [1076, 1090, 831], [1140, 1154, 1095]),
    ...arrows([974, 274], [1086, 965], [1146, 859]),
  ],
});

const dxProfile = chart({
  name: "dx10", base: LOW, title: "DX  FMU0015!-NYBOT  #10  US Dollar Index", left: 1284, top: 598, h: 430, right: 1541, bottom: 1004, ax: 1547, sessions: true,
  texts: [[1292, 113, "DX  FMU0015!-NYBOT  #10 - Profile Period: 1 Days"]],
  axis: [[180, "97.600"], [272, "97.500"], [365, "97.400"], [458, "97.300"], [551, "97.200"], [644, "97.100"], [737, "97.000"], [830, "96.900"], [923, "96.800"], [1016, "96.700"], [1109, "96.600"], [1202, "96.500"], [1293, "96.400"]],
  marks: [[413, "97.350"]],
  timeY: 1343, badge: [1566, "3 E"],
  times: [[1348, "7-31  9:30"], [1476, "8-3"]],
  shapes: [
    ...hist(1316, `140:14 155:26 165:32 180:20 186:48 190:10 225:22 235:9 252:24 265:30 290:22 310:16 330:34 335:44 342:24 365:28 375:40
      390:36 400:22 412:9 725:18 740:12 750:24 765:36 780:42 795:30 805:16 815:8 880:20 895:32 910:26 920:54 928:36 940:20 955:28
      975:24 990:34 1000:50 1008:34 1020:26 1050:18 1070:12 1090:8 1130:14 1165:20 1190:50 1195:38 1215:24 1235:40 1240:58 1246:24
      1270:34 1285:22`, 1302),
    ...hist(1380, `315:9 410:14 450:9 560:30 570:22 585:32 592:22 620:12 645:9 715:14 735:26 760:20 790:28 820:30 850:28 858:14 865:9
      1010:12 1060:16 1090:22 1110:16 1125:24 1140:12 1150:9`, 1277),
    ...hist(1448, "291:8 360:14 377:46 382:16 408:32 412:12 430:9", 459),
    ...hist(1512, "300:8 350:14 370:22 400:20 415:12 425:26 435:34 440:20 450:9", 510),
    ...cyan([1348, 1000, 1277], [1404, 384, 453], [1476, 372, 432]),
    ...strips(1286, `-1:216-300V -1:310-340G -1:345-375N 0:258-266G 0:266-297r 0:300-306G 0:309-330B 0:345-372Y 0:372-393V 1:264-297B
      1:300-306V 1:315-333V 1:345-372B 1:372-388V 2:266-297M 2:348-372V 3:266-297G 4:267-297B`),
    ...strips(1350, `0:315-477B 0:477-543G 0:543-705r 0:705-835g 0:796-799v 0:835-1000y 0:1000-1060o 0:1060-1277p 0:1227-1230h
      1:315-450M 1:450-477R 1:477-500B 1:543-560G 1:560-610O 1:610-638Y 1:705-710m 1:710-835b 1:835-873g 1:1000-1060y 1:1060-1272o
      2:393-417N 2:417-453R 2:453-485N 2:560-575G 2:575-610Y 2:610-635G 2:705-820m 2:835-873b 3:417-458N 3:576-608G 3:710-782r
      4:417-453Y`),
    ...strips(1406, `0:291-315b 0:315-372g 0:372-384v 0:384-450p 0:450-459M 1:315-350b 1:350-375m 1:375-435o 1:435-453r 2:330-342Y
      2:342-366O 2:366-384r 2:384-411y 2:411-440r 3:340-375Y 3:375-384r 3:384-408m 3:408-435B 4:351-375G 4:375-390N 4:390-408O
      4:420-432V 5:357-375B 5:381-390N 5:393-408B 6:375-390G 7:381-393B`),
    ...strips(1478, `0:300-315M 0:315-372B 0:372-405o 0:405-417v 0:417-432p 0:432-510M 1:315-357M 1:372-402y 1:402-423G 1:430-483R
      2:357-400G 2:400-415b 2:415-430R 3:357-410B 3:410-420R 4:372-405V 4:405-415R 5:400-410R`),
    ...dash(GREEN, [1287, 1309, 245], [1427, 1441, 354], [1487, 1505, 345], [1363, 1373, 864]),
    ...dash(RED, [1295, 1309, 321], [1407, 1441, 483], [1487, 1505, 456]),
    ...arrows([1373, 422], [1429, 425], [1504, 412]),
  ],
});

const euProfile = chart({
  name: "eu11", base: LOW, title: "6EU5-CME  #11  Euro Fx (Sep15)", left: 1603, top: 598, h: 430, right: 1858, bottom: 1004, ax: 1863, sessions: true,
  texts: [[1612, 113, "6EU5-CME  #11 - Profile Period: 1 Days, TPOs"]],
  axis: [[160, "1.1120"], [284, "1.1100"], [407, "1.1080"], [530, "1.1060"], [656, "1.1040"], [779, "1.1020"], [902, "1.1000"], [1028, "1.0980"], [1150, "1.0960"], [1273, "1.0940"]],
  marks: [[970, "1.0989"]],
  timeY: 1343, badge: [1886, "3 E"],
  times: [[1652, "7-31  9:30"], [1788, "8-3"]],
  shapes: [
    ...hist(1624, `147:9 180:15 200:22 225:28 235:20 260:12 300:9 410:16 425:30 450:38 475:30 495:16 520:22 540:14 560:10 595:24 610:18
      640:10 960:18 985:34 1000:26 1025:20 1060:26 1090:22 1120:30 1145:38 1165:28 1185:12 1200:8 1225:18 1240:34 1248:46 1258:28
      1275:18 1290:9`, 1302),
    ...hist(1684, `168:9 275:14 300:20 335:34 350:24 370:18 400:12 410:9 540:14 555:22 590:26 610:18 650:14 670:10 790:9 825:18 832:26
      845:14 855:9 960:14 980:9`, 1089),
    ...hist(1756, "930:9 960:14 980:24 1000:34 1012:48 1022:60 1032:30 1040:14 1060:20 1068:10", 1083),
    ...hist(1828, "885:9 895:16 910:26 950:34 960:26 975:34 1000:46 1010:30 1030:20 1050:14 1065:9", 1077),
    ...cyan([1652, 168, 414], [1708, 972, 1041], [1788, 955, 1023]),
    ...strips(1602, "0:978-1035V 0:1188-1270G 1:1197-1209B 1:1220-1227G 1:1251-1263B 2:1220-1227B"),
    ...strips(1654, `0:168-192o 0:192-414p 0:234-240h 0:414-582y 0:582-705g 0:624-630v 0:705-712m 0:712-873r 0:873-936G 0:936-1089B
      1:192-390o 1:390-414y 1:531-582g 1:582-705b 1:705-711r 1:780-795Y 1:795-855O 1:855-873G 1:918-936B 1:936-1089M 2:339-390y
      2:545-582b 2:588-690m 2:690-705r 2:787-843Y 2:843-855G 2:918-936N 2:936-985R 2:985-1008N 3:624-693r 3:795-843G 3:930-984N
      4:948-984Y`),
    ...strips(1710, `0:930-960V 0:960-975R 0:975-1040p 0:1000-1008v 0:1040-1080g 1:954-965B 1:965-985m 1:985-1035o 1:1035-1077b
      2:960-972B 2:972-985r 2:985-1035y 2:1041-1053Y 3:966-985V 3:985-1040g 4:975-982B 4:985-1005r 4:1010-1040m 5:985-1005N
      5:1010-1040r 6:990-1035O 7:990-1035G 8:1012-1035B`),
    ...strips(1790, `0:885-942V 0:942-955G 0:955-1023p 0:985-992v 0:1023-1077B 1:891-942R 1:948-978g 1:978-1018y 1:1023-1065V
      2:942-955R 2:955-975B 2:975-1010G 3:955-970R 3:970-1020B 4:972-1000V 5:980-990V 6:978-990R`),
    ...[252, 345, 537, 630, 723, 816, 909, 1008].flatMap((v) => hline(LOW, PAPER, 1654, 1668, v)),
    ...dash(GREEN, [1715, 1749, 945], [1799, 1821, 933], [1604, 1617, 1167]),
    ...dash(RED, [1659, 1677, 531], [1719, 1749, 1068], [1799, 1821, 1032], [1607, 1617, 1242]),
    ...arrows([1677, 953], [1728, 976], [1808, 970]),
  ],
});

const columns = [[niss, nvol], [es, esProfile], [nq, nqProfile], [zn, znProfile], [hg, gc, cl, dxProfile], [euProfile]];
</script>

<style>
body {
  margin: 0;
  background: #d4d0c8;
}
</style>

<style scoped>
.app {
  position: relative;
  min-height: 100vh;
  display: flex;
  flex-direction: column;
  background: #d4d0c8;
  color: #111;
  font: 11px/14px "Noto Sans", "Open Sans", sans-serif;
  overflow: hidden;
}

button {
  margin: 0;
  padding: 0;
  border: 0;
  background: none;
  color: inherit;
  font: inherit;
}

h1,
h2 {
  margin: 0;
}

.titlebar {
  display: flex;
  align-items: center;
  height: 20px;
  padding-right: 1px;
  background: #08090b;
}

.titlebar h1 {
  flex: 1;
  margin-left: 9px;
  color: #dcdcdc;
  font: bold 19px/20px "DejaVu Sans", sans-serif;
  white-space: nowrap;
}

.globe {
  width: 20px;
  height: 20px;
  flex: none;
}

.globe circle {
  fill: #0a18f0;
}

.globe path {
  fill: #1ef01e;
}

.ring {
  display: block;
  width: 16px;
  height: 16px;
  flex: none;
  fill: none;
  stroke: #999;
  stroke-width: 2;
}

.round {
  margin-left: 4px;
}

.menu {
  display: flex;
  height: 19px;
  align-items: center;
  gap: 1px;
}

.menu button {
  padding: 2px 6px 0;
}

.toolbar {
  display: flex;
  height: 30px;
  gap: 4px;
}

.status {
  box-sizing: border-box;
  width: 174px;
  margin-right: -4px;
  padding-left: 7px;
  border: 1px solid;
  border-color: #808080 #fff #fff #808080;
  background: #48f240;
  font-size: 11px;
  line-height: 28px;
}

.tool-group {
  display: flex;
}

.tool {
  box-sizing: border-box;
  min-width: 29px;
  padding: 0 4px;
  border: 2px solid;
  border-color: #fff #505050 #505050 #fff;
  box-shadow: inset -1px -1px #808080;
  background: #d4d0c8;
  color: #000;
  font: bold 13px/24px "Liberation Sans", Arial, sans-serif;
}

.tool.icon {
  width: 30px;
  padding: 0;
}

.tool.thin {
  min-width: 30px;
  padding: 0 2px;
  font-weight: normal;
}

.tool:disabled {
  color: #808080;
  font-weight: normal;
  text-shadow: 1px 1px #fff;
}

.tool.pressed {
  border-color: #505050 #fff #fff #505050;
  box-shadow: none;
  background: repeating-conic-gradient(#fff 0 25%, #d4d0c8 0 50%) 0 0 / 2px 2px;
}

.tool svg {
  display: block;
  width: 26px;
  height: 26px;
  fill: none;
  stroke: #000;
}

.tool svg .pointer {
  fill: #fff;
}

.tool svg .solid {
  fill: #000;
}

.tool svg text {
  fill: #000;
  stroke: none;
  font: bold 7px "DejaVu Sans Mono", monospace;
}

.books {
  display: flex;
  align-items: flex-end;
  height: 22px;
  padding-left: 2px;
  border-bottom: 1px solid #fff;
}

.book {
  height: 18px;
  padding: 0 4px;
  border: 1px solid;
  border-color: #fff #404040 transparent #fff;
  box-shadow: inset -1px 0 #808080;
}

.book.on {
  height: 19px;
  padding: 0 8px;
  background: #0a246a;
  color: #fff;
}

.desktop {
  display: grid;
  grid-template-columns: repeat(6, minmax(0, 1fr));
  column-gap: 2px;
  margin-top: 5px;
  padding: 0 6px 1px 2px;
  border-top: 2px solid #505050;
  background: #808080;
}

.column {
  min-width: 0;
}

.column:nth-child(-n + 2) {
  padding-top: 1px;
}

.win {
  padding: 3px;
  border: 1px solid;
  border-color: #d4d0c8 #404040 #404040 #d4d0c8;
  box-shadow: inset 1px 1px #fff, inset -1px -1px #808080;
  background: #d4d0c8;
}

.win + .win {
  margin-top: -2px;
  position: relative;
}

.win.bare {
  margin-top: 0;
  padding-top: 0;
  border-top: 0;
}

.win-title {
  display: flex;
  align-items: center;
  height: 18px;
  margin-bottom: 1px;
  padding: 0 2px;
  background: linear-gradient(90deg, #808080, #c0c0c0);
}

.win-title h2 {
  flex: 1;
  min-width: 0;
  overflow: hidden;
  color: #d4d0c8;
  font: 11px/18px "DejaVu Sans", sans-serif;
  white-space: nowrap;
}

.win-title button {
  box-sizing: border-box;
  width: 16px;
  height: 14px;
  border: 1px solid;
  border-color: #fff #404040 #404040 #fff;
  box-shadow: inset -1px -1px #808080;
  background: #d4d0c8;
}

.win-title .close {
  margin-left: 2px;
}

.win-title svg {
  display: block;
  width: 12px;
  height: 10px;
  margin-left: 1px;
}

.win-body {
  border: solid;
  border-width: 2px 1px 1px 2px;
  border-color: #606060 #fff #fff #606060;
  background: #f5f5dc;
}

.chart {
  display: block;
  shape-rendering: crispEdges;
}

.chart text {
  font: 14px "Roboto Condensed", "Liberation Sans Narrow", sans-serif;
}

.chart .inv,
.chart .mark {
  fill: #f5f5dc;
}

.session {
  stroke: #808080;
  stroke-dasharray: 1 1;
}

.scroll {
  display: flex;
  height: 16px;
  background: repeating-conic-gradient(#fff 0 25%, #d4d0c8 0 50%) 0 0 / 2px 2px;
}

.scroll button,
.thumb {
  display: flex;
  align-items: center;
  justify-content: center;
  box-sizing: border-box;
  width: 16px;
  border: 1px solid;
  border-color: #fff #404040 #404040 #fff;
  box-shadow: inset -1px -1px #808080;
  background: #d4d0c8;
}

.scroll svg {
  width: 4px;
  height: 7px;
}

.thumb {
  margin-left: auto;
}

.ladder {
  position: relative;
  z-index: 1;
  box-sizing: border-box;
  height: 475px;
  margin-right: -6px;
  padding: 0 0 7px 8px;
  border-radius: 8px 0 0 8px;
  background: #1c1c1c;
}

.ladder + .win {
  margin-top: 0;
}

.ladder-title {
  display: flex;
  align-items: center;
  height: 29px;
  background: linear-gradient(#555, #2a2a2a 50%, #0c0c0c 50%, #1c1c1c);
}

.ladder-title h2 {
  flex: 1;
  margin-left: 9px;
  color: #fff;
  font: bold 19px/29px "DejaVu Sans", sans-serif;
  white-space: nowrap;
}

.menu.inner {
  height: 20px;
  background: #d4d0c8;
}

.dom {
  position: relative;
  height: 419px;
  border-left: 1px solid #111;
  background: linear-gradient(#dfdfc8 228px, #bfcfd9 228px);
  font: 14px/18px "Roboto Condensed", "Liberation Sans Narrow", sans-serif;
  overflow: hidden;
}

.dom table {
  width: calc(100% - 2px);
  height: 412px;
  table-layout: fixed;
  border-collapse: collapse;
}

.dom th,
.dom td {
  padding: 0;
  border-bottom: 1px solid #909090;
  color: #222;
  font-weight: normal;
  text-align: center;
  line-height: 18px;
}

.dom thead th {
  height: 9px;
}

.dom thead span,
.dom tfoot span {
  display: block;
  height: 9px;
  line-height: 20px;
}

.dom tfoot td {
  height: 9px;
  border-bottom: 0;
}

.dom tfoot span {
  overflow: hidden;
}

.dom .buy {
  width: 35px;
  border-left: 1px solid #00b000;
}

.dom .price {
  width: 68px;
  border-left: 1px solid #00b000;
}

.dom .sell {
  width: 35px;
  border-left: 1px solid #d00000;
  border-right: 1px solid #d00000;
}

.dom td.last {
  background: #fff;
}

.dom .low td + td {
  border-bottom: 2px solid #d00000;
}

.dom tbody tr:last-child td {
  border-bottom: 0;
}

.dom .up {
  color: #30b030;
}

.dom .down {
  color: #d02030;
}

.qty {
  position: absolute;
  top: 2px;
  left: 3px;
  display: flex;
  flex-direction: column;
  align-items: flex-start;
}

.qty span {
  background: #fff;
  line-height: 19px;
}

.tabs {
  display: flex;
  align-items: flex-start;
  height: 28px;
  white-space: pre;
}

.tabs button {
  height: 20px;
  margin-top: 6px;
  padding: 3px 5px 0 4px;
  border: 1px solid;
  border-color: #505050 #404040 #404040 #fff;
  box-shadow: inset -1px -1px #808080;
}

.tabs .on {
  height: 27px;
  margin-top: 0;
  padding: 0 4px 3px 7px;
  border-top-color: transparent;
}

.clock {
  position: absolute;
  top: 6px;
  right: 89px;
  width: 200px;
  color: #fff;
  font-family: "DejaVu Sans", sans-serif;
  text-align: center;
}

.time {
  font-size: 38px;
  line-height: 42px;
}

.date {
  font-size: 25px;
  line-height: 24px;
}
</style>
